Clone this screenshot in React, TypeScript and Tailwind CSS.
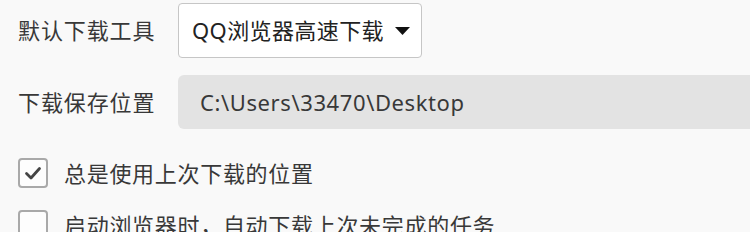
import { useState } from 'react';

const font = "font-['Noto_Sans','Noto_Sans_CJK_SC',sans-serif]";

function CheckRow({ label, checked }: { label: string; checked: boolean }) {
  return (
    <label className="flex items-center gap-[16px] h-[30px]">
      <span className="flex items-center justify-center w-[30px] h-[30px] rounded-[4px] border-2 border-[#a9a9a9] bg-[#fdfdfd]">
        {checked && (
          <svg width="20" height="20" viewBox="0 0 20 20" fill="none">
            <path d="M3.5 10.5 L8 15 L16.5 5.5" stroke="#444" strokeWidth="2.8" strokeLinecap="round" strokeLinejoin="round" />
          </svg>
        )}
      </span>
      <span className="text-[22px] tracking-[0.7px] text-[#383838]">{label}</span>
    </label>
  );
}

export default function App() {
  const [tool] = useState('QQ浏览器高速下载');

  return (
    <div className={`w-[750px] h-[232px] overflow-hidden bg-[#f9f9f9] pl-[18px] pt-[3px] ${font}`}>
      {/* 默认下载工具 */}
      <div className="flex items-center">
        <div className="w-[160px] text-[22px] tracking-[0.9px] text-[#383838]">默认下载工具</div>
        <button className="flex items-center h-[55px] w-[244px] pl-[13px] pr-[11px] bg-white border border-[#c6c6c6] rounded-[4px] text-[22px] tracking-[0.4px] text-[#222]">
          <span className="flex-1 text-left">{tool}</span>
          <svg width="15" height="8" viewBox="0 0 15 8">
            <path d="M0 0 H15 L7.5 8 Z" fill="#111" />
          </svg>
        </button>
      </div>

      {/* 下载保存位置 */}
      <div className="flex items-center mt-[17px]">
        <div className="w-[160px] text-[22px] tracking-[0.9px] text-[#383838]">下载保存位置</div>
        <div className="flex items-center flex-1 h-[54px] pl-[22px] bg-[#e3e3e3] rounded-l-[6px] text-[22px] tracking-[0.6px] text-[#383838]">
          C:\Users\33470\Desktop
        </div>
      </div>

      <div className="flex flex-col gap-[22px] mt-[29px]">
        <CheckRow label="总是使用上次下载的位置" checked />
        <CheckRow label="启动浏览器时，自动下载上次未完成的任务" checked={false} />
      </div>
    </div>
  );
}
